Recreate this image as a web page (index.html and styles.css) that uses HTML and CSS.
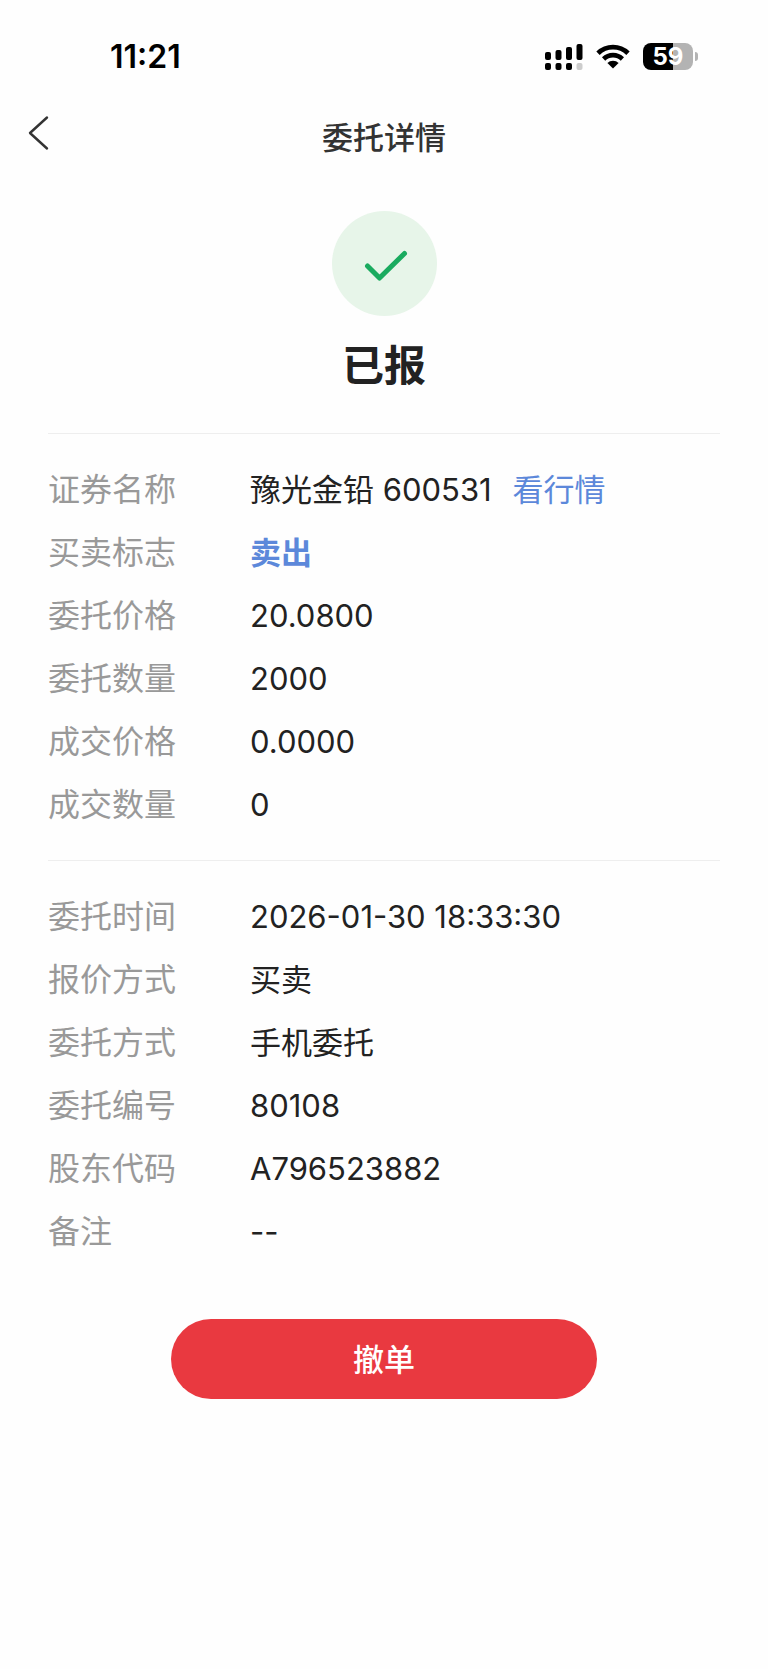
FILE: index.html
```
<!DOCTYPE html>
<html lang="zh-CN">

<head>
  <meta charset="UTF-8" />
  <meta name="viewport" content="width=device-width, initial-scale=1.0" />
  <title>委托详情</title>
  <link rel="stylesheet" href="styles.css">
</head>

<body>
  <div class="status-bar">
    <span class="time">11:21</span>
    <div class="status-icons">
      <!-- 双卡信号 -->
      <svg width="38" height="26" viewBox="0 0 38 26">
        <rect x="0" y="8" width="6" height="8" rx="2" />
        <rect x="10.5" y="6" width="6" height="10" rx="2" />
        <rect x="21" y="3" width="6" height="13" rx="2" />
        <rect x="31.5" y="0" width="6" height="16" rx="2" />
        <rect x="0" y="19" width="6" height="7" rx="2" />
        <rect x="10.5" y="19" width="6" height="7" rx="2" />
        <rect x="21" y="19" width="6" height="7" rx="2" />
        <rect x="31.5" y="19" width="6" height="7" rx="2" fill="#ccc" />
      </svg>
      <!-- wifi -->
      <svg width="34" height="25" viewBox="0 0 34 25">
        <path d="M2 9.2 A21.5 21.5 0 0 1 32 9.2" fill="none" stroke="#000" stroke-width="4.8" />
        <path d="M7.6 15 A13.4 13.4 0 0 1 26.4 15" fill="none" stroke="#000" stroke-width="4.6" />
        <path d="M17 24.6 L11.4 19 A8 8 0 0 1 22.6 19 Z" />
      </svg>
      <!-- 电量 -->
      <div class="battery">
        <span class="battery-body">59</span>
        <span class="battery-cap"></span>
      </div>
    </div>
  </div>

  <header class="nav">
    <button type="button" class="btn-back" aria-label="返回">
      <svg width="22" height="36" viewBox="0 0 22 36">
        <path d="M19 2.5 L2 18 L19 33.5" fill="none" stroke="#333" stroke-width="2.4" stroke-linecap="round" stroke-linejoin="round" />
      </svg>
    </button>
    <h1>委托详情</h1>
  </header>

  <main>
    <div class="result">
      <div class="result-icon">
        <svg width="44" height="32" viewBox="0 0 44 32">
          <path d="M3.5 16 L15.5 28 L40.5 3.5" fill="none" stroke="#1aab5f" stroke-width="5" stroke-linecap="round" stroke-linejoin="round" />
        </svg>
      </div>
      <h2>已报</h2>
    </div>

    <dl class="info">
      <dt>证券名称</dt>
      <dd>豫光金铅 600531 <a href="#" class="link">看行情</a></dd>
      <dt>买卖标志</dt>
      <dd class="sell">卖出</dd>
      <dt>委托价格</dt>
      <dd>20.0800</dd>
      <dt>委托数量</dt>
      <dd>2000</dd>
      <dt>成交价格</dt>
      <dd>0.0000</dd>
      <dt>成交数量</dt>
      <dd>0</dd>
    </dl>

    <dl class="info">
      <dt>委托时间</dt>
      <dd>2026-01-30 18:33:30</dd>
      <dt>报价方式</dt>
      <dd>买卖</dd>
      <dt>委托方式</dt>
      <dd>手机委托</dd>
      <dt>委托编号</dt>
      <dd>80108</dd>
      <dt>股东代码</dt>
      <dd>A796523882</dd>
      <dt>备注</dt>
      <dd>--</dd>
    </dl>

    <button type="button" class="btn-cancel">撤单</button>
  </main>
</body>

</html>
```
FILE: styles.css
```
* {
  box-sizing: border-box;
}

body {
  margin: 0;
  min-height: 100vh;
  background-color: #fefefe;
  color: #222;
  font-family: Inter, "Noto Sans CJK SC", sans-serif;
  font-size: 31px;
}

h1,
h2,
dl,
dd {
  margin: 0;
}

/* 状态栏 */
.status-bar {
  display: flex;
  justify-content: space-between;
  align-items: center;
  height: 96px;
  padding: 17px 70px 0 110px;
  color: #000;
}

.time {
  font-size: 32px;
  font-weight: 600;
}

.status-icons {
  display: flex;
  align-items: center;
  gap: 13px;
}

.battery {
  display: flex;
  align-items: center;
  gap: 2px;
}

.battery-body {
  width: 50px;
  border-radius: 8px;
  background: linear-gradient(to right, #000 59%, #b3b3b3 59%);
  color: #fff;
  font-size: 24px;
  font-weight: 700;
  line-height: 27px;
  text-align: center;
}

.battery-cap {
  width: 3px;
  height: 9px;
  border-radius: 0 4px 4px 0;
  background-color: #b3b3b3;
}

/* 导航 */
.nav {
  display: grid;
  grid-template-columns: 80px 1fr 80px;
  align-items: center;
  height: 78px;
}

.nav h1 {
  color: #333;
  font-size: 31px;
  font-weight: 500;
  text-align: center;
}

.btn-back {
  display: flex;
  height: 74px;
  padding: 19px 28px;
  border: 0;
  background: none;
  align-self: start;
  cursor: pointer;
}

main {
  padding: 0 48px;
}

/* 委托结果 */
.result {
  display: flex;
  flex-direction: column;
  align-items: center;
  gap: 18px;
  padding: 37px 0 35px;
}

.result-icon {
  display: flex;
  justify-content: center;
  align-items: center;
  width: 105px;
  height: 105px;
  padding: 5px 0 0 3px;
  border-radius: 50%;
  background-color: #e7f5e9;
}

.result h2 {
  font-size: 42px;
  font-weight: 700;
  line-height: 64px;
}

/* 委托信息 */
.info {
  display: grid;
  grid-template-columns: 202px 1fr;
  padding: 24px 0;
  border-top: 1px solid #eee;
  line-height: 63px;
}

.info dt {
  color: #999;
  font-size: 32px;
}

.info .sell {
  color: #5c88da;
  font-weight: 700;
}

.link {
  margin-left: 12px;
  color: #5c88da;
  text-decoration: none;
}

.btn-cancel {
  display: block;
  width: 426px;
  max-width: 100%;
  height: 80px;
  margin: 32px auto;
  padding: 0 0 4px;
  border: 0;
  border-radius: 40px;
  background-color: #e93940;
  color: #fff;
  font-family: inherit;
  font-size: 31px;
  font-weight: 500;
  cursor: pointer;
}
```
